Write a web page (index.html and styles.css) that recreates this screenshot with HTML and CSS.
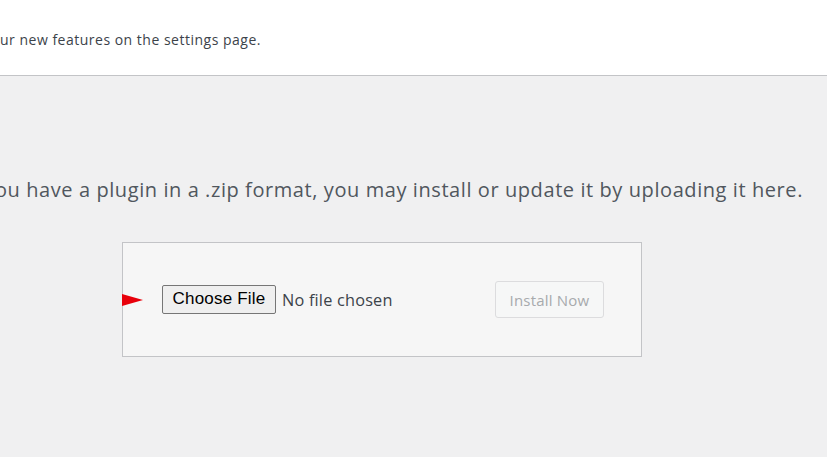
FILE: index.html
```html
<!DOCTYPE html>
<html lang="en">
<head>
<meta charset="utf-8">
<title>Upload Plugin</title>
<link rel="stylesheet" href="styles.css">
</head>
<body>
<div class="notice">
  <p class="notice-text">ur new features on the settings page.</p>
</div>
<main class="main">
  <p class="upload-help">ou have a plugin in a .zip format, you may install or update it by uploading it here.</p>
  <form class="upload-box">
    <span class="arrow" aria-hidden="true"></span>
    <span class="file-btn">Choose File</span>
    <span class="file-name">No file chosen</span>
    <span class="install-btn">Install Now</span>
  </form>
</main>
</body>
</html>
```
FILE: styles.css
```css
html, body {
  margin: 0;
  padding: 0;
}
body {
  background: #f0f0f1;
  font-family: "Open Sans", "Noto Sans", sans-serif;
  color: #3c434a;
  width: 827px;
  height: 457px;
  overflow: hidden;
}
.notice {
  background: #ffffff;
  height: 75px;
  border-bottom: 1px solid #c3c4c7;
  display: flex;
  align-items: center;
}
.notice-text {
  margin: 0;
  padding-top: 4px;
  font-size: 14px;
  letter-spacing: 0.5px;
  color: #3c434a;
  white-space: nowrap;
}
.main {
  padding-top: 100px;
}
.upload-help {
  margin: 0 0 0 -5px;
  font-size: 20px;
  letter-spacing: 0.58px;
  line-height: 28px;
  color: #50575e;
  white-space: nowrap;
}
.upload-box {
  position: relative;
  margin: 38px 0 0 122px;
  background: #f6f6f6;
  border: 1px solid #c3c4c7;
  display: flex;
  align-items: center;
  padding-left: 39px;
  box-sizing: border-box;
  width: 520px;
  height: 115px;
}
.arrow {
  position: absolute;
  left: -1px;
  top: 51px;
  width: 0;
  height: 0;
  border-top: 6px solid transparent;
  border-bottom: 6px solid transparent;
  border-left: 21px solid #e8000b;
}
.file-btn {
  box-sizing: border-box;
  width: 114px;
  height: 29px;
  margin-top: -1px;
  border: 1px solid #767676;
  border-radius: 2px;
  background: #efefef;
  font-family: "Liberation Sans", Arial, sans-serif;
  font-size: 17px;
  letter-spacing: 0.2px;
  color: #000;
  display: flex;
  align-items: center;
  justify-content: center;
}
.file-name {
  margin-left: 6px;
  font-size: 16.3px;
  letter-spacing: 0.2px;
  color: #3c434a;
  width: 213px;
}
.install-btn {
  box-sizing: border-box;
  width: 109px;
  height: 37px;
  border: 1px solid #dcdcde;
  border-radius: 3px;
  background: #f6f7f7;
  color: #a7aaad;
  font-size: 15px;
  letter-spacing: 0.2px;
  display: flex;
  align-items: center;
  justify-content: center;
}
```
